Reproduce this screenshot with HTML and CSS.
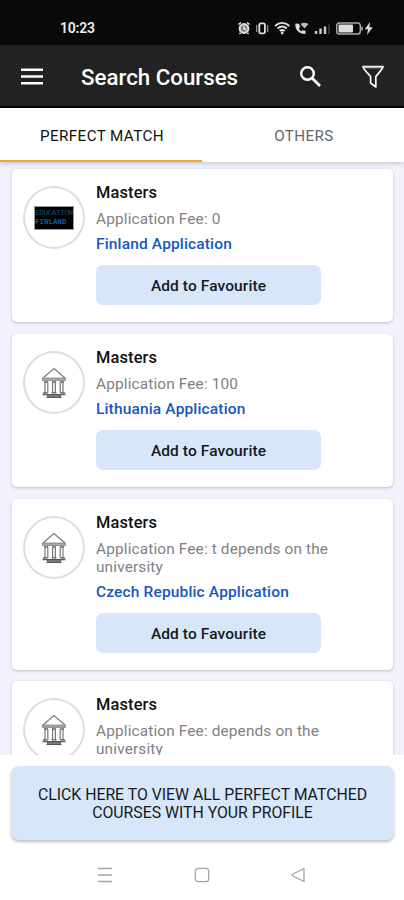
FILE: index.html
```html
<!DOCTYPE html>
<html lang="en">
<head>
<meta charset="utf-8">
<title>Search Courses</title>
<link rel="stylesheet" href="styles.css">
</head>
<body>
<svg class="defs" aria-hidden="true">
  <symbol id="bank" viewBox="0 0 26 32">
    <path d="M2 11 13 1.5 24 11" fill="none" stroke="#777" stroke-width="1.1"/>
    <path d="M1.5 11h23v2.5h-23z" fill="#aaa" stroke="#777" stroke-width=".7"/>
    <path d="M3 15h4M11 15h4M19 15h4" stroke="#666" stroke-width="1.4"/>
    <path d="M4 15v11M6.8 15v11M11.6 15v11M14.4 15v11M19.2 15v11M22 15v11" stroke="#777" stroke-width="1.2"/>
    <path d="M1.5 27.5h5M19.5 27.5h5M2 25.8h4.5M10.5 25.8h5M19.5 25.8H24" stroke="#666" stroke-width="1.3"/>
    <path d="M6.5 27.5h13v1.7h-13zM5.5 30.5h15" fill="#999" stroke="#555" stroke-width="1.2"/>
  </symbol>
</svg>
<div class="screen">
  <div class="status">
    <span class="time">10:23</span>
    <svg class="status-icons" viewBox="0 0 138 18" width="138" height="18">
      <circle cx="7" cy="9.5" r="4.3" fill="#777" stroke="#ddd" stroke-width="2.2"/>
      <path d="M1.5 5.5 4 3.5M12.5 5.5 10 3.5M3.5 14 2.5 15M10.5 14l1 1M7 7.3v2.5l2 1" fill="none" stroke="#eee" stroke-width="1.6"/>
      <rect x="22.3" y="4.4" width="5.6" height="10" rx="1.5" fill="none" stroke="#ddd" stroke-width="1.8"/>
      <path d="M19.7 6v7M30.6 6v7" stroke="#888" stroke-width="1.4"/>
      <path d="M38 7c4.4-4 10-4 14.400 0M40.500 9.500c3-2.500 6.400-2.500 9.400 0M42.700 12c1.700-1.300 3.300-1.300 5 0" fill="none" stroke="#ddd" stroke-width="1.900"/>
      <circle cx="45.200" cy="14" r="1.400" fill="#ddd"/>
      <path d="M58.500 4.500c-1 6 3.500 10.500 10 10.500v-3.200l-3-.6-1.200 1c-1.200-.7-2-1.700-2.300-2.800l1-1.400-.8-3.300z" fill="#ddd"/>
      <path d="M63.500 5c2.500-1.700 5-1.700 8 0L67.500 9.500z" fill="#bbb"/>
      <path d="M79 15v-3M83.500 15v-5.500M88 15V7.500" stroke="#ccc" stroke-width="2.400"/>
      <path d="M92 15V5.500" stroke="#333" stroke-width="2"/>
      <rect x="99.700" y="4" width="23.600" height="11" rx="2.800" fill="none" stroke="#aaa" stroke-width="1.400"/>
      <rect x="101.500" y="5.600" width="14.500" height="8" rx="1" fill="#ddd"/>
      <path d="M125 7.500v4" stroke="#aaa" stroke-width="1.500"/>
      <path d="M133 3 127.800 10.200h3.200l-1 5.800 5.700-7.700h-3.300z" fill="#ddd"/>
    </svg>
  </div>
  <header class="appbar">
    <svg class="menu" viewBox="0 0 22 17" width="22" height="17"><path d="M0 1.700h22M0 8.500h22M0 15.300h22" stroke="#fff" stroke-width="2.400"/></svg>
    <h1>Search Courses</h1>
    <svg class="search" viewBox="0 0 23 23" width="23" height="23"><circle cx="8.500" cy="8.500" r="6.300" fill="none" stroke="#fff" stroke-width="2.400"/><path d="m13 13 8 8" stroke="#fff" stroke-width="2.700"/></svg>
    <svg class="filter" viewBox="0 0 22 24" width="22" height="24"><path d="M1 1.500h20c0 2-1.500 3.300-7.200 10V22l-5.200-4v-6.500C2.500 4.800 1 3.500 1 1.500Z" fill="none" stroke="#fff" stroke-width="1.700" stroke-linejoin="round"/><path d="M2 2.500h18" stroke="#bbb" stroke-width="1.500"/></svg>
  </header>
  <nav class="tabs">
    <div class="tab active"><span>PERFECT MATCH</span></div>
    <div class="tab"><span>OTHERS</span></div>
  </nav>
  <main class="list">
    <article class="card">
      <div class="logo"><div class="finland"><span>EDUCATION</span><b>FINLAND</b></div></div>
      <div class="info">
        <h2>Masters</h2>
        <p>Application Fee: 0</p>
        <a>Finland Application</a>
        <button>Add to Favourite</button>
      </div>
    </article>
    <article class="card">
      <div class="logo"><svg width="26" height="32"><use href="#bank"/></svg></div>
      <div class="info">
        <h2>Masters</h2>
        <p>Application Fee: 100</p>
        <a>Lithuania Application</a>
        <button>Add to Favourite</button>
      </div>
    </article>
    <article class="card tall">
      <div class="logo"><svg width="26" height="32"><use href="#bank"/></svg></div>
      <div class="info">
        <h2>Masters</h2>
        <p>Application Fee: t depends on the<br>university</p>
        <a>Czech Republic Application</a>
        <button>Add to Favourite</button>
      </div>
    </article>
    <article class="card tall">
      <div class="logo"><svg width="26" height="32"><use href="#bank"/></svg></div>
      <div class="info">
        <h2>Masters</h2>
        <p>Application Fee: depends on the<br>university</p>
      </div>
    </article>
  </main>
  <footer class="cta">
    <button>CLICK HERE TO VIEW ALL PERFECT MATCHED<br>COURSES WITH YOUR PROFILE</button>
  </footer>
  <div class="sysnav">
    <svg viewBox="0 0 16 16" width="16" height="16"><path d="M1 1.500h14M1 8h14M1 14.500h14"/></svg>
    <svg viewBox="0 0 16 16" width="16" height="16"><rect x="1.300" y="1.300" width="13.400" height="13.400" rx="3"/></svg>
    <svg viewBox="0 0 16 16" width="16" height="16"><path d="M14 1.500v13L2 8.500v-1z"/></svg>
  </div>
</div>
</body>
</html>
```

FILE: styles.css
```css
* { box-sizing: border-box; }
body, h1, h2, p { margin: 0; }
body { font-family: Roboto, "Liberation Sans", sans-serif; background: #fff; }
.defs { position: absolute; width: 0; height: 0; }
.screen { width: 404px; height: 900px; display: flex; flex-direction: column; overflow: hidden; }
.status { flex: none; height: 45px; background: #090909; display: flex; align-items: center; padding: 10px 29px 0 60px; justify-content: space-between; }
.time { color: #eee; font-size: 14px; font-weight: 600; letter-spacing: -.2px; }
.status-icons { flex: none; }
.appbar { flex: none; height: 63px; background: #222; border-bottom: 2px solid #000; display: flex; align-items: center; padding: 0 20px 0 21px; color: #fff; }
.appbar h1 { flex: 1; margin-left: 38px; font-size: 22.300px; font-weight: 500; line-height: 28px; padding-top: 3px; }
.menu { margin-top: 2px; }
.search { margin: 1px 40px 0 0; }
.filter { margin-top: 2px; }
.tabs { flex: none; height: 54px; display: flex; background: #fff; position: relative; box-shadow: 0 1px 5px rgba(0,0,0,.22); }
.tab { flex: 1; display: flex; align-items: center; justify-content: center; padding: 4px 0 0 2px; font-size: 15.200px; letter-spacing: .4px; color: #666; border-bottom: 2px solid transparent; }
.active { color: #111; border-bottom-color: #f2a536; }
.list { flex: none; height: 593px; background: #f1f2fb; padding: 7px 11px 0 12px; overflow: hidden; display: flex; flex-direction: column; gap: 12px; }
.card { flex: none; height: 153px; background: #fff; border-radius: 5px; box-shadow: 0 1px 3px rgba(0,0,0,.22); display: flex; gap: 11px; padding: 13px 12px 0 11px; }
.card.tall { height: 171px; }
.card:last-child { margin-top: -1px; }
.logo { flex: none; width: 62px; height: 63px; margin-top: 4px; border: 2px solid #dedee0; border-radius: 50%; display: flex; align-items: center; justify-content: center; }
.finland { width: 40px; height: 24px; background: #000; border: 1px solid #999; color: #164f80; display: flex; flex-direction: column; justify-content: center; font: 7.500px/9px "Liberation Mono", monospace; overflow: hidden; }
.finland span { letter-spacing: -.3px; }
.finland b { color: #075fa8; }
.info { width: 250px; padding-top: 1px; display: flex; flex-direction: column; align-items: flex-start; }
.info h2 { font-size: 16.400px; font-weight: 500; line-height: 20px; color: #111; letter-spacing: .15px; }
.info p { margin-top: 7px; font-size: 15.400px; line-height: 18px; color: #818181; white-space: nowrap; letter-spacing: .14px; }
.info a { margin-top: 7px; font-size: 15.500px; font-weight: 500; line-height: 19px; color: #1658bd; letter-spacing: .15px; }
.info button { margin: 11px 0 0; width: 225px; height: 40px; border: 0; border-radius: 7px; background: #d7e7f9; font: 500 15.500px/20px Roboto, sans-serif; letter-spacing: .1px; color: #15191e; padding: 2px 0 0; }
.cta { flex: none; height: 93px; background: #fff; padding: 11px 10px 0 11px; }
.cta button { width: 100%; height: 74px; border: 0; border-radius: 8px; background: #d7e7f9; box-shadow: 0 2px 3px rgba(0,0,0,.25); font: 400 15.800px/18.500px Roboto, sans-serif; color: #15191e; padding: 2px 0 0; }
.sysnav { flex: 1; display: flex; justify-content: space-between; align-items: center; padding: 2px 98px 0 97px; }
.sysnav svg { fill: none; stroke: #a5a5a5; stroke-width: 1.300; stroke-linejoin: round; }
```
